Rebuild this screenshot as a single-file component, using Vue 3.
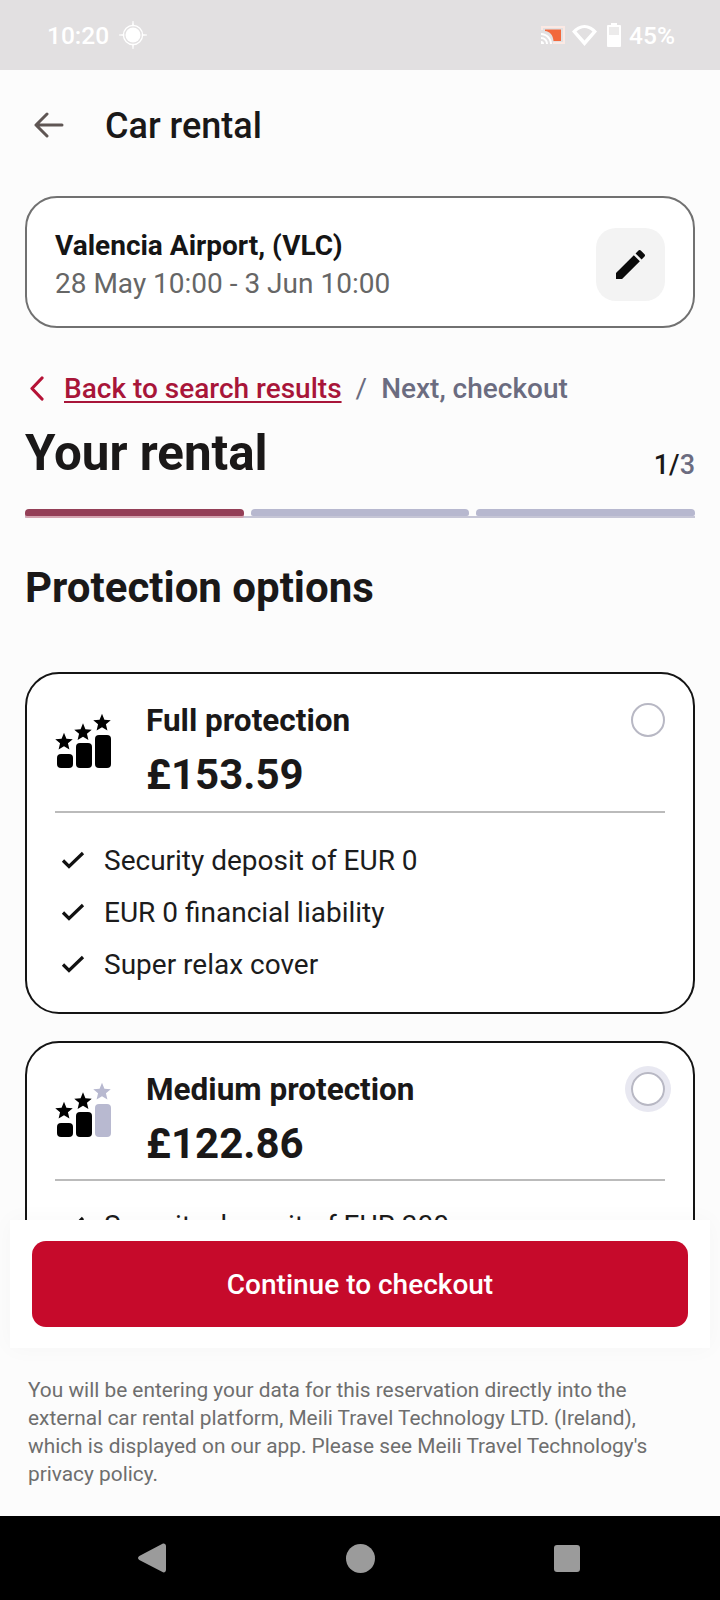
<script setup>
const star = (cx, cy, R) => {
  const pts = []
  for (let i = 0; i < 10; i++) {
    const r = i % 2 ? R * 0.45 : R
    const a = (-90 + i * 36) * Math.PI / 180
    pts.push((cx + r * Math.cos(a)).toFixed(2) + ',' + (cy + r * Math.sin(a)).toFixed(2))
  }
  return pts.join(' ')
}
const stars = [star(9, 29, 9.2), star(28, 19.5, 9.2), star(47, 10, 9.2)]
const plans = [
  { name: 'Full protection', price: '£153.59', dim: false, focus: false, rows: ['Security deposit of EUR 0', 'EUR 0 financial liability', 'Super relax cover'] },
  { name: 'Medium protection', price: '£122.86', dim: true, focus: true, rows: ['Security deposit of EUR 300'] }
]
</script>

<template>
  <div class="screen">
    <div class="status">
      <div class="status-left">
        <span>10:20</span>
        <svg class="gps" viewBox="0 0 28 28" fill="none" stroke="#fff">
          <circle cx="14" cy="14" r="7.500" fill="#fff" stroke="none" />
          <circle cx="14" cy="14" r="9.600" stroke-width="1.300" />
          <path d="M13.200 5h1.600L14 0zM13.200 23h1.600L14 28zM5 13.200v1.600L0 14zM23 13.200v1.600l5-.8z" fill="#fff" stroke-width=".6" />
        </svg>
      </div>
      <div class="status-right">
        <svg class="cast" viewBox="0 0 24 18">
          <path d="M0 0h24v18H12v-2h10V2H2v2H0z" fill="#fbe9e4" />
          <path d="M4 3.500h16v11.500h-7.500C12 9 9 5.500 4 5z" fill="#f2683c" />
          <path d="M0 7c6 0 11 5 11 11H9C9 13 5 9 0 9zM0 11c4 0 7 3 7 7H5c0-3-2-5-5-5zM0 15c2 0 3 1 3 3H0z" fill="#fff" />
        </svg>
        <svg class="wifi" viewBox="0 0 25 21">
          <path d="M12.500 21 0 6.500C3.500 2.500 7.800 0 12.500 0S21.500 2.500 25 6.500zM12.500 15.500 20.500 6.500C18 4.500 15.500 3 12.500 3S7 4.500 4.500 6.500z" fill="#fff" fill-rule="evenodd" />
        </svg>
        <svg class="battery" viewBox="0 0 14 24">
          <path d="M4 0h6v2h3a1 1 0 0 1 1 1v20a1 1 0 0 1-1 1H1a1 1 0 0 1-1-1V3a1 1 0 0 1 1-1h3zM2 4v8h10V4z" fill="#fff" fill-rule="evenodd" />
          <rect x="2" y="4" width="10" height="8" fill="#fff" opacity=".35" />
        </svg>
        <span>45%</span>
      </div>
    </div>

    <div class="scroll">
      <header class="bar">
        <svg class="arrow" viewBox="0 0 30 26" fill="none" stroke="#5f5654" stroke-width="3" stroke-linecap="round" stroke-linejoin="round">
          <path d="M28 13H2M13 2 2 13l11 11" />
        </svg>
        <h1>Car rental</h1>
      </header>

      <section class="search">
        <div>
          <div class="place">Valencia Airport, (VLC)</div>
          <div class="dates">28 May 10:00 - 3 Jun 10:00</div>
        </div>
        <div class="edit">
          <svg viewBox="3 3 18 18" width="29" height="29"><path d="M3 17.250V21h3.750L17.810 9.940l-3.750-3.750L3 17.250zM20.710 7.040c.39-.39.39-1.020 0-1.410l-2.340-2.340c-.39-.39-1.020-.39-1.410 0l-1.830 1.830 3.750 3.750 1.830-1.830z" fill="#0b0b0b" /></svg>
        </div>
      </section>

      <nav class="crumbs">
        <svg class="chev" viewBox="0 0 15 25" fill="none" stroke="#b51236" stroke-width="3.200" stroke-linecap="round" stroke-linejoin="round"><path d="M13 2 3 12.500 13 23" /></svg>
        <a class="link">Back to search results</a>
        <span class="slash">/</span>
        <span class="next">Next, checkout</span>
      </nav>

      <div class="title-row">
        <h2>Your rental</h2>
        <div class="step">1/<span>3</span></div>
      </div>

      <div class="progress">
        <div class="seg on"></div>
        <div class="seg"></div>
        <div class="seg"></div>
      </div>

      <h3>Protection options</h3>

      <article v-for="p in plans" :key="p.name" class="plan">
        <div class="plan-top">
          <svg class="levels" viewBox="0 0 56 56">
            <rect x="2" y="41" width="16" height="14" rx="4" />
            <rect x="21" y="30" width="16" height="25" rx="4" />
            <rect x="40" y="22" width="16" height="33" rx="4" :class="{ dim: p.dim }" />
            <polygon :points="stars[0]" />
            <polygon :points="stars[1]" />
            <polygon :points="stars[2]" :class="{ dim: p.dim }" />
          </svg>
          <div class="plan-text">
            <div class="plan-name">{{ p.name }}</div>
            <div class="plan-price">{{ p.price }}</div>
          </div>
          <div class="radio" :class="{ focus: p.focus }"></div>
        </div>
        <ul>
          <li v-for="r in p.rows" :key="r">
            <svg viewBox="0 0 24 18" width="24" height="18" fill="none" stroke="#111" stroke-width="3.200"><path d="M2 9.500 8 15.500 22 2" /></svg>
            <span>{{ r }}</span>
          </li>
        </ul>
      </article>
    </div>

    <div class="cta">
      <button>Continue to checkout</button>
    </div>

    <p class="legal">You will be entering your data for this reservation directly into the external car rental platform, Meili Travel Technology LTD. (Ireland), which is displayed on our app. Please see Meili Travel Technology's privacy policy.</p>

    <div class="nav">
      <svg viewBox="0 0 28 30" width="28" height="30"><path d="M24.500 .800c1.800-.8 3.500.5 3.500 2.400v23.600c0 2-1.800 3.200-3.500 2.300L1.300 17c-1.700-1-1.700-3 0-4z" fill="#9b9b9b" /></svg>
      <div class="home"></div>
      <div class="recent"></div>
    </div>
  </div>
</template>

<style scoped>
.screen {
  width: 720px;
  height: 1600px;
  display: flex;
  flex-direction: column;
  overflow: hidden;
  background: #fcfcfc;
  font-family: Roboto, "Liberation Sans", sans-serif;
  color: #1a1818;
}
.status {
  height: 70px;
  flex: none;
  background: #e2e0e1;
  color: #fff;
  display: flex;
  align-items: center;
  justify-content: space-between;
  padding: 0 45px 0 47px;
  font-size: 24.500px;
  font-weight: 500;
}
.status-left, .status-right { display: flex; align-items: center; }
.gps { width: 28px; height: 28px; margin-left: 10px; }
.cast { width: 24px; height: 18px; margin-right: 7px; }
.wifi { width: 25px; height: 21px; margin-right: 10px; }
.battery { width: 14px; height: 24px; margin-right: 8px; }

.scroll {
  height: 1150px;
  flex: none;
  overflow: hidden;
  padding: 0 25px;
  box-sizing: border-box;
}
.bar {
  height: 110px;
  display: flex;
  align-items: center;
  margin-bottom: 16px;
}
.arrow { width: 30px; height: 26px; margin-left: 9px; }
h1 {
  margin: 2px 0 0 41px;
  font-size: 36px;
  font-weight: 500;
}
.search {
  height: 132px;
  box-sizing: border-box;
  border: 2px solid #717171;
  border-radius: 32px;
  background: #fff;
  display: flex;
  align-items: center;
  justify-content: space-between;
  padding: 5px 28px 0;
}
.place { font-size: 28px; font-weight: 700; line-height: 38px; color: #151515; }
.dates { font-size: 28px; line-height: 38px; color: #666; }
.edit {
  width: 69px;
  height: 73px;
  border-radius: 20px;
  background: #f3f3f3;
  display: flex;
  align-items: center;
  justify-content: center;
}
.crumbs {
  display: flex;
  align-items: center;
  height: 40px;
  margin-top: 40px;
  font-size: 28px;
  font-weight: 500;
}
.chev { width: 15px; height: 25px; margin-left: 4px; margin-right: 20px; }
.link { color: #a81539; text-decoration: underline; text-decoration-thickness: 2px; text-underline-offset: 3px; }
.slash { color: #6b6c80; margin: 0 14px; font-weight: 400; }
.next { color: #6b6c80; }
.title-row {
  display: flex;
  justify-content: space-between;
  align-items: flex-end;
  height: 64px;
  margin-top: 13px;
}
h2 { margin: 0; font-size: 49.300px; font-weight: 700; line-height: 64px; }
.step { font-size: 27px; font-weight: 500; line-height: 38px; margin-bottom: 1px; }
.step span { color: #6b6c80; }
.progress {
  display: flex;
  gap: 7px;
  margin-top: 24px;
  height: 7px;
  border-bottom: 2px solid #c6c6d6;
  box-sizing: content-box;
}
.seg { flex: 1; height: 7px; border-radius: 4px 4px 2px 2px; background: #b7b8cf; }
.seg.on { background: #943f57; box-shadow: 0 2px 0 #d4a5b1; }
h3 {
  margin: 45px 0 0;
  font-size: 42px;
  font-weight: 700;
  line-height: 50px;
}
.plan {
  border: 2px solid #141414;
  border-radius: 34px;
  background: #fff;
  padding: 0 28px 28px;
  margin-top: 59px;
  height: 342px;
  box-sizing: border-box;
}
.plan + .plan { margin-top: 27px; }
.plan-top {
  display: flex;
  align-items: flex-start;
  height: 137px;
  border-bottom: 2px solid #bbb;
  box-sizing: content-box;
}
.plan + .plan .plan-top { height: 136px; }
.plan + .plan ul { margin-top: 18px; }
.levels { width: 56px; height: 56px; margin-top: 39px; flex: none; fill: #000; }
.levels .dim { fill: #b8b9d0; }
.plan-text { flex: 1; margin-left: 35px; padding-top: 28px; }
.plan-name { font-size: 31.500px; font-weight: 700; line-height: 38px; }
.plan-price { font-size: 42px; font-weight: 700; line-height: 56px; margin-top: 7px; }
.radio {
  width: 34px;
  height: 34px;
  box-sizing: border-box;
  border: 2px solid #b8b8c4;
  border-radius: 50%;
  margin-top: 29px;
}
.radio.focus { box-shadow: 0 0 0 6px #e8e8f1; }
ul { list-style: none; margin: 21px 0 0; padding: 0; }
li {
  display: flex;
  align-items: center;
  height: 52px;
  font-size: 28px;
  color: #1c1c1c;
}
li svg { margin-left: 6px; margin-right: 19px; }

.cta {
  height: 128px;
  flex: none;
  margin: 0 10px;
  padding: 21px 22px;
  box-sizing: border-box;
  background: #fff;
  box-shadow: 0 0 22px rgba(0, 0, 0, .03);
  position: relative;
}
button {
  width: 100%;
  height: 86px;
  border: none;
  border-radius: 14px;
  background: #c60a2b;
  color: #fff;
  font: 500 28px Roboto, sans-serif;
}
.legal {
  margin: 28px 0 0;
  padding: 0 60px 0 28px;
  height: 140px;
  font-size: 20.850px;
  line-height: 28px;
  color: #6e6e6e;
}
.nav {
  flex: 1;
  background: #000;
  display: flex;
  align-items: center;
  position: relative;
}
.nav svg { margin-left: 138px; }
.home { width: 29px; height: 29px; border-radius: 50%; background: #9b9b9b; margin-left: 180px; }
.recent { width: 26px; height: 27px; border-radius: 3px; background: #9b9b9b; margin-left: 179px; }
</style>
